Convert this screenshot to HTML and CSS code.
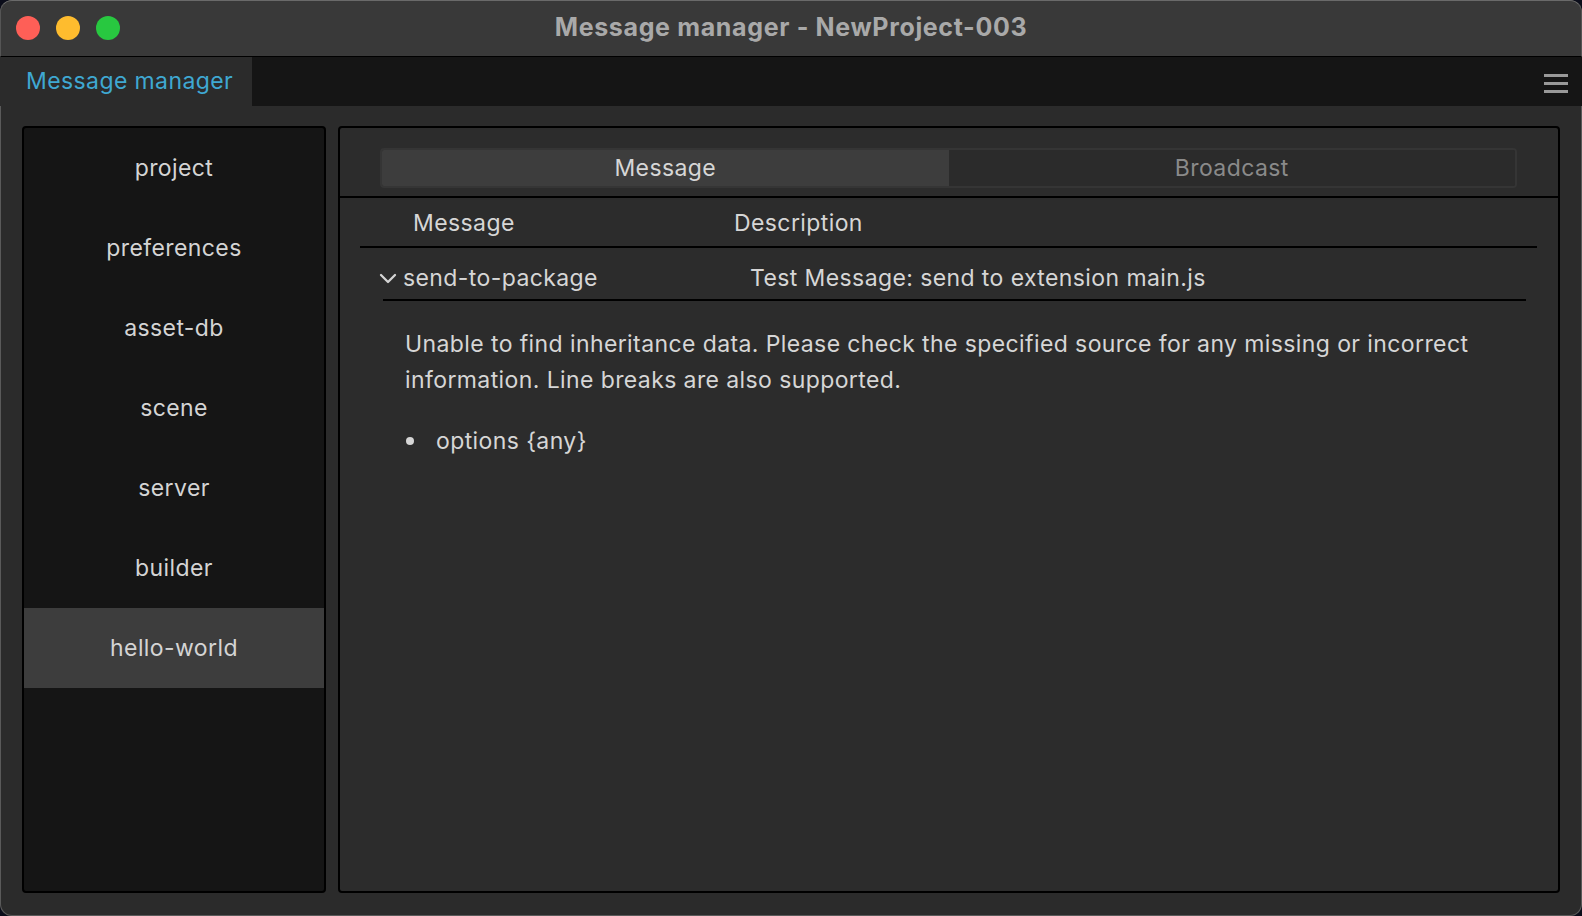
FILE: index.html
```html
<!DOCTYPE html>
<html lang="en">
<head>
<meta charset="utf-8">
<title>Message manager - NewProject-003</title>
<link rel="stylesheet" href="styles.css">
</head>
<body>
<div class="window">
  <header class="titlebar">
    <div class="lights">
      <span class="light red"></span>
      <span class="light yellow"></span>
      <span class="light green"></span>
    </div>
    <div class="title">Message manager - NewProject-003</div>
    <div class="spacer"></div>
  </header>
  <nav class="tabbar">
    <div class="tab active">Message manager</div>
    <div class="tabfill"></div>
    <button class="menu" aria-label="menu">
      <svg width="24" height="19" viewBox="0 0 24 19"><rect x="0" y="0" width="24" height="3" fill="#999"/><rect x="0" y="8" width="24" height="3" fill="#999"/><rect x="0" y="16" width="24" height="3" fill="#999"/></svg>
    </button>
  </nav>
  <main class="main">
    <aside class="sidebar">
      <div class="side-item">project</div>
      <div class="side-item">preferences</div>
      <div class="side-item">asset-db</div>
      <div class="side-item">scene</div>
      <div class="side-item">server</div>
      <div class="side-item">builder</div>
      <div class="side-item selected">hello-world</div>
    </aside>
    <section class="content">
      <div class="segbar">
        <div class="segmented">
          <div class="seg active">Message</div>
          <div class="seg">Broadcast</div>
        </div>
      </div>
      <div class="table">
        <div class="thead">
          <div class="col-name">Message</div>
          <div class="col-desc">Description</div>
        </div>
        <div class="row">
          <div class="row-name">
            <svg class="chev" width="18" height="11" viewBox="0 0 18 11"><path d="M2 2 L9 9 L16 2" fill="none" stroke="#d4d4d4" stroke-width="2.3" stroke-linecap="round" stroke-linejoin="round"/></svg>
            <span>send-to-package</span>
          </div>
          <div class="row-desc">Test Message: send to extension main.js</div>
        </div>
        <div class="detail">
          <p class="detail-text">Unable to find inheritance data. Please check the specified source for any missing or incorrect information. Line breaks are also supported.</p>
          <ul class="params">
            <li>options {any}</li>
          </ul>
        </div>
      </div>
    </section>
  </main>
</div>
</body>
</html>
```

FILE: styles.css
```css
* { box-sizing: border-box; }
html, body { margin: 0; padding: 0; }
body {
  background: #0b0d1a;
  font-family: "Inter", "Liberation Sans", sans-serif;
  width: 1582px;
  height: 916px;
  overflow: hidden;
}
.window {
  width: 1582px;
  height: 916px;
  border-radius: 12px;
  overflow: hidden;
  background: #2b2b2b;
  display: flex;
  flex-direction: column;
  box-shadow: inset 0 0 0 1px #5a5a5a;
}
.titlebar {
  height: 57px;
  flex: none;
  background: #393939;
  border-bottom: 1px solid #000;
  border-top: 1px solid #6a6a6a;
  border-left: 1px solid #555;
  border-right: 1px solid #555;
  border-radius: 12px 12px 0 0;
  display: grid;
  grid-template-columns: 1fr auto 1fr;
  align-items: center;
}
.lights {
  display: flex;
  gap: 16px;
  padding-left: 15px;
  padding-bottom: 1px;
}
.light {
  width: 24px;
  height: 24px;
  border-radius: 50%;
  display: block;
}
.red { background: #fe5f57; }
.yellow { background: #febc2e; }
.green { background: #28c840; }
.title {
  color: #a9a9a9;
  font-weight: 700;
  font-size: 25px;
  letter-spacing: 0.65px;
  padding-bottom: 4px;
}
.tabbar {
  height: 49px;
  flex: none;
  background: #151515;
  display: flex;
  align-items: stretch;
}
.tab {
  width: 252px;
  background: #2b2b2b;
  color: #3fa8d2;
  font-size: 23px;
  letter-spacing: 0.4px;
  padding-left: 26px;
  display: flex;
  align-items: center;
  padding-bottom: 1px;
}
.tabfill { flex: 1; }
.menu {
  background: none;
  border: 0;
  padding: 0;
  margin-right: 14px;
  display: flex;
  align-items: center;
  padding-top: 4px;
}
.menu svg { display: block; }
.main {
  flex: 1;
  display: flex;
  gap: 12px;
  padding: 20px 22px 23px 22px;
  min-height: 0;
}
.sidebar {
  width: 304px;
  flex: none;
  background: #151515;
  border: 2px solid #000;
  border-radius: 4px;
  display: flex;
  flex-direction: column;
}
.side-item {
  height: 80px;
  flex: none;
  display: flex;
  align-items: center;
  justify-content: center;
  color: #d4d4d4;
  font-size: 23px;
  letter-spacing: 0.4px;
  padding-bottom: 1px;
}
.side-item.selected { background: #3d3d3d; }
.content {
  flex: 1;
  background: #2c2c2c;
  border: 2px solid #000;
  border-radius: 4px;
  display: flex;
  flex-direction: column;
  min-width: 0;
}
.segbar {
  padding: 20px 41px 8px 40px;
  border-bottom: 2px solid #000;
}
.segmented {
  display: flex;
  height: 40px;
  border-radius: 4px;
  overflow: hidden;
  border: 2px solid #353535;
}
.seg {
  flex: 1;
  display: flex;
  align-items: center;
  justify-content: center;
  font-size: 23px;
  letter-spacing: 0.4px;
  color: #8a8a8a;
  background: #2b2b2b;
}
.seg.active {
  background: #3d3d3d;
  color: #d6d6d6;
}
.table {
  padding: 0 21px 0 20px;
}
.thead {
  display: flex;
  height: 50px;
  align-items: center;
  padding-left: 53px;
  border-bottom: 2px solid #000;
  color: #d6d6d6;
  font-size: 23px;
  letter-spacing: 0.4px;
  padding-top: 2px;
}
.col-name { width: 321px; }
.row {
  display: flex;
  height: 53px;
  align-items: center;
  margin-left: 23px;
  margin-right: 11px;
  border-bottom: 2px solid #000;
  color: #d6d6d6;
  font-size: 23px;
  letter-spacing: 0.4px;
  padding-top: 8px;
}
.row-name {
  width: 371px;
  display: flex;
  align-items: center;
  gap: 6px;
  margin-left: -4px;
}
.chev { display: block; margin-top: 1px; }
.detail {
  padding-left: 45px;
  padding-top: 26px;
  padding-right: 40px;
  color: #d6d6d6;
  font-size: 23px;
  letter-spacing: 0.4px;
}
.detail-text {
  margin: 0;
  line-height: 35.5px;
}
.params {
  list-style: none;
  margin: 28px 0 0 0;
  padding-left: 0;
  line-height: 30px;
}
.params li {
  display: flex;
  align-items: center;
}
.params li::before {
  content: "";
  width: 8px;
  height: 8px;
  border-radius: 50%;
  background: #d6d6d6;
  margin-left: 1px;
  margin-right: 22px;
  flex: none;
}
```
